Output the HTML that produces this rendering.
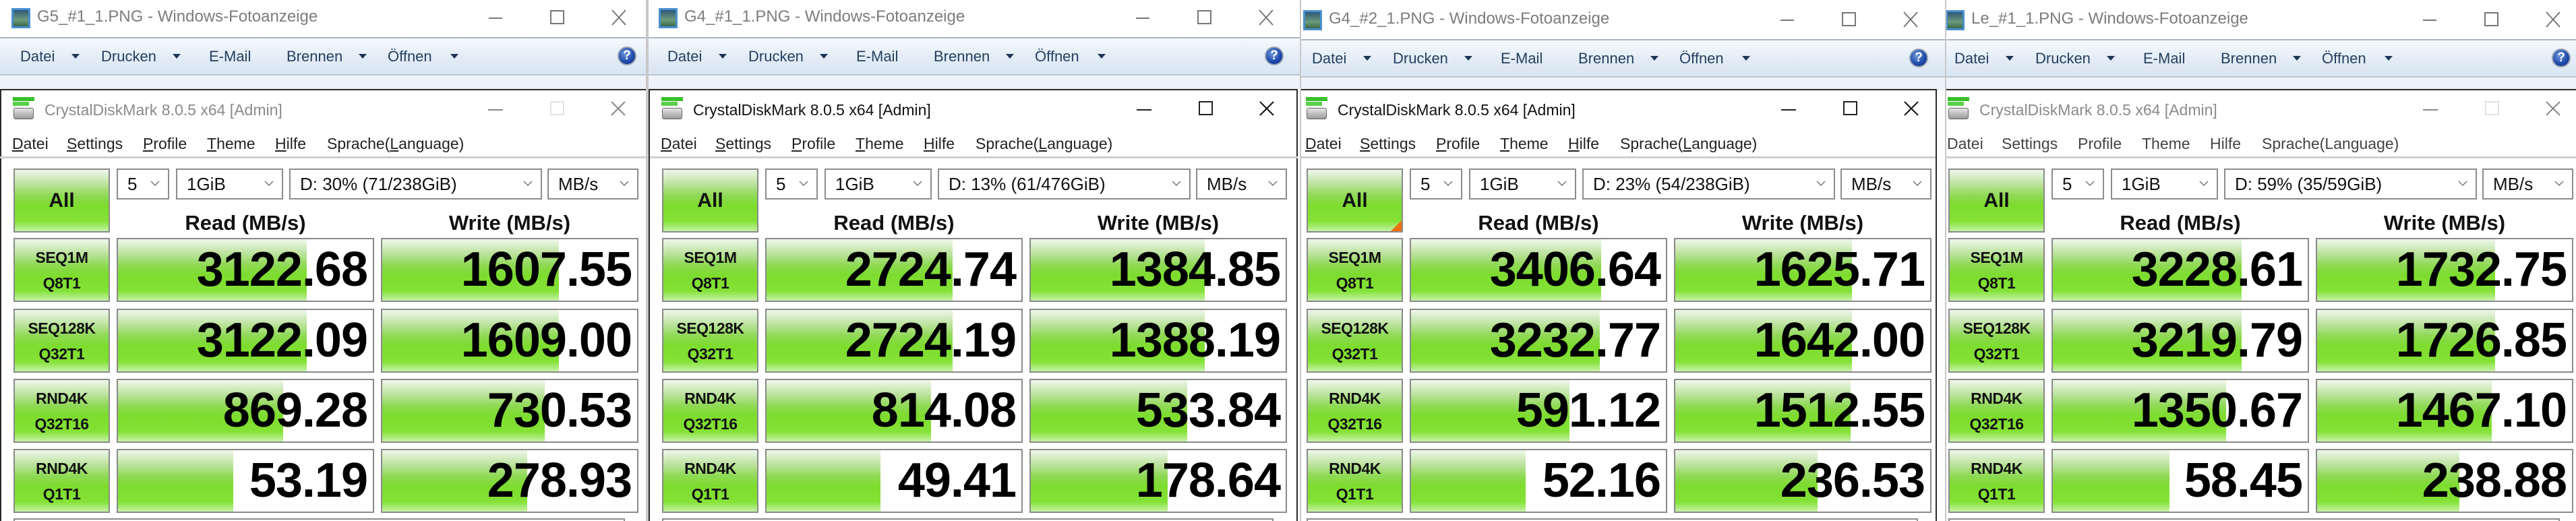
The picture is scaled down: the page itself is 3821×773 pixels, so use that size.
<!DOCTYPE html>
<html><head><meta charset="utf-8">
<style>
*{margin:0;padding:0;box-sizing:border-box}
body{width:3821px;height:773px;overflow:hidden;background:#fff;font-family:"Liberation Sans",Arial,sans-serif;position:relative}
.pn{position:absolute;top:0;height:773px;overflow:hidden;background:#fff}
.ly{position:absolute;top:0;left:0;width:980px;height:773px}
.a{position:absolute}
.ptitle{top:11px;left:55px;font-size:24px;color:#7c7c7c;white-space:nowrap}
.tb{left:0;top:55px;width:980px;height:57px;border-top:2px solid #aab7c5;border-bottom:2px solid #b8c4d2;background:linear-gradient(#f5f9fd,#e4edf7 50%,#d9e5f2)}
.strip{left:0;top:112px;width:980px;height:20px;background:#eef3f9}
.ti{top:71px;font-size:22px;color:#253e5e;white-space:nowrap}
.ar{top:80px;width:0;height:0;border-left:6px solid transparent;border-right:6px solid transparent;border-top:7px solid #1e3556}
.help{left:916px;top:69px;width:28px;height:28px;border-radius:50%;background:radial-gradient(circle at 40% 35%,#6f9be0,#1c46a8 60%,#123080);border:2px solid #9aa4b0;color:#fff;font-weight:bold;font-size:19px;text-align:center;line-height:24px}
.cdm{left:0;top:132px;width:980px;height:641px;background:#fff;border-top:2px solid #2a2a2a}
.ctitle{top:150px;left:66px;font-size:23px;white-space:nowrap}
.menu{top:200px;font-size:23px;color:#222;white-space:nowrap}
.menu u{text-decoration:underline}
.sep{left:0;top:232px;width:980px;height:3px;background:#cfcfcf}
.g{background:linear-gradient(#eef7ea 0%,#bfe4a3 22%,#8fd955 42%,#7ddc2e 58%,#84e236 84%,#c6f2a8 100%)}
.all{left:20px;top:250px;width:143px;height:95px;border:2px solid #8a8a8a;font-weight:bold;font-size:30px;text-align:center;line-height:91px;color:#111}
.cb{top:250px;height:46px;border:2px solid #8c8c8c;background:#fff;font-size:26px;line-height:42px;padding-left:14px;color:#111;white-space:nowrap}
.cb svg{position:absolute;right:12px;top:16px}
.hd{top:313px;width:382px;font-weight:bold;font-size:31px;text-align:center;color:#111}
.lb{left:20px;width:143px;height:95px;border:2px solid #8a8a8a;text-align:center;font-size:23px;color:#111;line-height:38px;padding-top:8px;font-weight:bold;letter-spacing:-0.5px}
.vb{width:382px;height:95px;border:2px solid #8a8a8a;background:#fff;overflow:hidden}
.vb .f{position:absolute;left:0;top:0;bottom:0}
.vb .t{position:absolute;right:8px;top:0;line-height:91px;font-size:72px;font-weight:bold;color:#000;letter-spacing:-1px}
.bot{left:20px;top:769px;width:907px;height:10px;border:2px solid #8a8a8a}
</style></head><body>

<!-- PANEL 1 -->
<div class="pn" style="left:0;width:960px">
 <div class="ly" style="left:0">
  <div class="a" style="left:17px;top:12px;width:28px;height:30px;border:3px solid #4a8fd0;background:linear-gradient(#2d5878,#6d9a7a 60%,#3a6a4a)"></div>
  <div class="a ptitle">G5_#1_1.PNG - Windows-Fotoanzeige</div>
  <div class="a" style="left:725px;top:26px;width:20px;height:2px;background:#777"></div>
  <div class="a" style="left:816px;top:15px;width:21px;height:21px;border:2px solid #777"></div>
  <svg class="a" style="left:907px;top:14px" width="22" height="24"><path d="M1 1L21 23M21 1L1 23" stroke="#777" stroke-width="2"/></svg>
  <div class="a tb"></div>
  <div class="a ti" style="left:30px">Datei</div><div class="a ar" style="left:106px"></div>
  <div class="a ti" style="left:150px">Drucken</div><div class="a ar" style="left:256px"></div>
  <div class="a ti" style="left:310px">E-Mail</div>
  <div class="a ti" style="left:425px">Brennen</div><div class="a ar" style="left:532px"></div>
  <div class="a ti" style="left:575px">Öffnen</div><div class="a ar" style="left:668px"></div>
  <div class="a help">?</div>
  <div class="a strip"></div>
 </div>
 <div class="ly" style="left:0">
  <div class="a cdm" style="border-left:2px solid #2a2a2a"></div>
  <div class="a" style="left:19px;top:144px;width:32px;height:6px;background:#39c02c"></div>
  <div class="a" style="left:19px;top:151px;width:24px;height:6px;background:#5bd04a"></div>
  <div class="a" style="left:20px;top:160px;width:30px;height:17px;border-radius:3px;background:linear-gradient(#e6e6e6,#9a9a9a);border:1px solid #666"></div>
  <div class="a ctitle" style="color:#8a8a8a">CrystalDiskMark 8.0.5 x64 [Admin]</div>
  <div class="a" style="left:724px;top:162px;width:22px;height:2px;background:#888"></div>
  <div class="a" style="left:816px;top:150px;width:21px;height:21px;border:2px solid #e2e2e2"></div>
  <svg class="a" style="left:906px;top:150px" width="22" height="22"><path d="M1 1L21 21M21 1L1 21" stroke="#888" stroke-width="2"/></svg>
  <div class="a menu" style="left:18px"><u>D</u>atei</div>
  <div class="a menu" style="left:99px"><u>S</u>ettings</div>
  <div class="a menu" style="left:212px"><u>P</u>rofile</div>
  <div class="a menu" style="left:307px"><u>T</u>heme</div>
  <div class="a menu" style="left:408px"><u>H</u>ilfe</div>
  <div class="a menu" style="left:485px">Sprache(<u>L</u>anguage)</div>
  <div class="a sep"></div>
  <div class="a all g">All</div>
  <div class="a cb" style="left:173px;width:78px">5<svg width="14" height="9"><path d="M1 1L7 7L13 1" stroke="#777" fill="none" stroke-width="1.5"/></svg></div>
  <div class="a cb" style="left:261px;width:159px">1GiB<svg width="14" height="9"><path d="M1 1L7 7L13 1" stroke="#777" fill="none" stroke-width="1.5"/></svg></div>
  <div class="a cb" style="left:429px;width:375px">D: 30% (71/238GiB)<svg width="14" height="9"><path d="M1 1L7 7L13 1" stroke="#777" fill="none" stroke-width="1.5"/></svg></div>
  <div class="a cb" style="left:812px;width:135px">MB/s<svg width="14" height="9"><path d="M1 1L7 7L13 1" stroke="#777" fill="none" stroke-width="1.5"/></svg></div>
  <div class="a hd" style="left:173px">Read (MB/s)</div>
  <div class="a hd" style="left:565px">Write (MB/s)</div>
  <div class="a lb g" style="top:353px">SEQ1M<br>Q8T1</div>
  <div class="a lb g" style="top:458px">SEQ128K<br>Q32T1</div>
  <div class="a lb g" style="top:562px">RND4K<br>Q32T16</div>
  <div class="a lb g" style="top:666px">RND4K<br>Q1T1</div>
  <div class="a vb" style="left:173px;top:353px"><div class="f g" style="width:280px"></div><div class="t">3122.68</div></div>
  <div class="a vb" style="left:173px;top:458px"><div class="f g" style="width:280px"></div><div class="t">3122.09</div></div>
  <div class="a vb" style="left:173px;top:562px"><div class="f g" style="width:245px"></div><div class="t">869.28</div></div>
  <div class="a vb" style="left:173px;top:666px"><div class="f g" style="width:171px"></div><div class="t">53.19</div></div>
  <div class="a vb" style="left:565px;top:353px"><div class="f g" style="width:262px"></div><div class="t">1607.55</div></div>
  <div class="a vb" style="left:565px;top:458px"><div class="f g" style="width:262px"></div><div class="t">1609.00</div></div>
  <div class="a vb" style="left:565px;top:562px"><div class="f g" style="width:241px"></div><div class="t">730.53</div></div>
  <div class="a vb" style="left:565px;top:666px"><div class="f g" style="width:215px"></div><div class="t">278.93</div></div>
  <div class="a bot"></div>
 </div>
 <div class="a" style="left:958px;top:0;width:2px;height:773px;background:#c8c8c8"></div>
</div>

<!-- PANEL 2 -->
<div class="pn" style="left:960px;width:968px">
 <div class="ly" style="left:0">
  <div class="a" style="left:17px;top:12px;width:28px;height:30px;border:3px solid #4a8fd0;background:linear-gradient(#2d5878,#6d9a7a 60%,#3a6a4a)"></div>
  <div class="a ptitle">G4_#1_1.PNG - Windows-Fotoanzeige</div>
  <div class="a" style="left:725px;top:26px;width:20px;height:2px;background:#777"></div>
  <div class="a" style="left:816px;top:15px;width:21px;height:21px;border:2px solid #777"></div>
  <svg class="a" style="left:907px;top:14px" width="22" height="24"><path d="M1 1L21 23M21 1L1 23" stroke="#777" stroke-width="2"/></svg>
  <div class="a tb"></div>
  <div class="a ti" style="left:30px">Datei</div><div class="a ar" style="left:106px"></div>
  <div class="a ti" style="left:150px">Drucken</div><div class="a ar" style="left:256px"></div>
  <div class="a ti" style="left:310px">E-Mail</div>
  <div class="a ti" style="left:425px">Brennen</div><div class="a ar" style="left:532px"></div>
  <div class="a ti" style="left:575px">Öffnen</div><div class="a ar" style="left:668px"></div>
  <div class="a help">?</div>
  <div class="a strip"></div>
  <div class="a" style="left:0;top:0;width:2px;height:773px;background:#c8c8c8"></div>
 </div>
 <div class="ly" style="left:2px">
  <div class="a cdm" style="border-left:2px solid #2a2a2a;width:963px;border-right:2px solid #2a2a2a"></div>
  <div class="a" style="left:19px;top:144px;width:32px;height:6px;background:#39c02c"></div>
  <div class="a" style="left:19px;top:151px;width:24px;height:6px;background:#5bd04a"></div>
  <div class="a" style="left:20px;top:160px;width:30px;height:17px;border-radius:3px;background:linear-gradient(#e6e6e6,#9a9a9a);border:1px solid #666"></div>
  <div class="a ctitle" style="color:#111">CrystalDiskMark 8.0.5 x64 [Admin]</div>
  <div class="a" style="left:724px;top:162px;width:22px;height:2px;background:#222"></div>
  <div class="a" style="left:816px;top:150px;width:21px;height:21px;border:2px solid #222"></div>
  <svg class="a" style="left:906px;top:150px" width="22" height="22"><path d="M1 1L21 21M21 1L1 21" stroke="#111" stroke-width="2"/></svg>
  <div class="a menu" style="left:18px"><u>D</u>atei</div>
  <div class="a menu" style="left:99px"><u>S</u>ettings</div>
  <div class="a menu" style="left:212px"><u>P</u>rofile</div>
  <div class="a menu" style="left:307px"><u>T</u>heme</div>
  <div class="a menu" style="left:408px"><u>H</u>ilfe</div>
  <div class="a menu" style="left:485px">Sprache(<u>L</u>anguage)</div>
  <div class="a sep" style="width:961px;left:2px"></div>
  <div class="a all g">All</div>
  <div class="a cb" style="left:173px;width:78px">5<svg width="14" height="9"><path d="M1 1L7 7L13 1" stroke="#777" fill="none" stroke-width="1.5"/></svg></div>
  <div class="a cb" style="left:261px;width:159px">1GiB<svg width="14" height="9"><path d="M1 1L7 7L13 1" stroke="#777" fill="none" stroke-width="1.5"/></svg></div>
  <div class="a cb" style="left:429px;width:375px">D: 13% (61/476GiB)<svg width="14" height="9"><path d="M1 1L7 7L13 1" stroke="#777" fill="none" stroke-width="1.5"/></svg></div>
  <div class="a cb" style="left:812px;width:135px">MB/s<svg width="14" height="9"><path d="M1 1L7 7L13 1" stroke="#777" fill="none" stroke-width="1.5"/></svg></div>
  <div class="a hd" style="left:173px">Read (MB/s)</div>
  <div class="a hd" style="left:565px">Write (MB/s)</div>
  <div class="a lb g" style="top:353px">SEQ1M<br>Q8T1</div>
  <div class="a lb g" style="top:458px">SEQ128K<br>Q32T1</div>
  <div class="a lb g" style="top:562px">RND4K<br>Q32T16</div>
  <div class="a lb g" style="top:666px">RND4K<br>Q1T1</div>
  <div class="a vb" style="left:173px;top:353px"><div class="f g" style="width:276px"></div><div class="t">2724.74</div></div>
  <div class="a vb" style="left:173px;top:458px"><div class="f g" style="width:276px"></div><div class="t">2724.19</div></div>
  <div class="a vb" style="left:173px;top:562px"><div class="f g" style="width:244px"></div><div class="t">814.08</div></div>
  <div class="a vb" style="left:173px;top:666px"><div class="f g" style="width:169px"></div><div class="t">49.41</div></div>
  <div class="a vb" style="left:565px;top:353px"><div class="f g" style="width:258px"></div><div class="t">1384.85</div></div>
  <div class="a vb" style="left:565px;top:458px"><div class="f g" style="width:258px"></div><div class="t">1388.19</div></div>
  <div class="a vb" style="left:565px;top:562px"><div class="f g" style="width:232px"></div><div class="t">533.84</div></div>
  <div class="a vb" style="left:565px;top:666px"><div class="f g" style="width:203px"></div><div class="t">178.64</div></div>
  <div class="a bot"></div>
 </div>
</div>

<!-- PANEL 3 -->
<div class="pn" style="left:1928px;width:957px">
 <div class="ly" style="left:-12px;top:3px">
  <div class="a" style="left:17px;top:12px;width:28px;height:30px;border:3px solid #4a8fd0;background:linear-gradient(#2d5878,#6d9a7a 60%,#3a6a4a)"></div>
  <div class="a ptitle">G4_#2_1.PNG - Windows-Fotoanzeige</div>
  <div class="a" style="left:725px;top:26px;width:20px;height:2px;background:#777"></div>
  <div class="a" style="left:816px;top:15px;width:21px;height:21px;border:2px solid #777"></div>
  <svg class="a" style="left:907px;top:14px" width="22" height="24"><path d="M1 1L21 23M21 1L1 23" stroke="#777" stroke-width="2"/></svg>
  <div class="a tb"></div>
  <div class="a ti" style="left:30px">Datei</div><div class="a ar" style="left:106px"></div>
  <div class="a ti" style="left:150px">Drucken</div><div class="a ar" style="left:256px"></div>
  <div class="a ti" style="left:310px">E-Mail</div>
  <div class="a ti" style="left:425px">Brennen</div><div class="a ar" style="left:532px"></div>
  <div class="a ti" style="left:575px">Öffnen</div><div class="a ar" style="left:668px"></div>
  <div class="a help">?</div>
  <div class="a strip"></div>
 </div>
 <div class="a" style="left:0;top:0;width:2px;height:773px;background:#c8c8c8"></div>
 <div class="ly" style="left:-10px">
  <div class="a cdm" style="left:12px;width:943px;border-right:2px solid #2a2a2a"></div>
  <div class="a" style="left:19px;top:144px;width:32px;height:6px;background:#39c02c"></div>
  <div class="a" style="left:19px;top:151px;width:24px;height:6px;background:#5bd04a"></div>
  <div class="a" style="left:20px;top:160px;width:30px;height:17px;border-radius:3px;background:linear-gradient(#e6e6e6,#9a9a9a);border:1px solid #666"></div>
  <div class="a ctitle" style="color:#111">CrystalDiskMark 8.0.5 x64 [Admin]</div>
  <div class="a" style="left:724px;top:162px;width:22px;height:2px;background:#222"></div>
  <div class="a" style="left:816px;top:150px;width:21px;height:21px;border:2px solid #222"></div>
  <svg class="a" style="left:906px;top:150px" width="22" height="22"><path d="M1 1L21 21M21 1L1 21" stroke="#111" stroke-width="2"/></svg>
  <div class="a menu" style="left:18px"><u>D</u>atei</div>
  <div class="a menu" style="left:99px"><u>S</u>ettings</div>
  <div class="a menu" style="left:212px"><u>P</u>rofile</div>
  <div class="a menu" style="left:307px"><u>T</u>heme</div>
  <div class="a menu" style="left:408px"><u>H</u>ilfe</div>
  <div class="a menu" style="left:485px">Sprache(<u>L</u>anguage)</div>
  <div class="a sep" style="left:12px;width:941px"></div>
  <div class="a all g">All<div class="a" style="right:0;bottom:0;width:0;height:0;border-left:16px solid transparent;border-bottom:16px solid #f07010"></div></div>
  <div class="a cb" style="left:173px;width:78px">5<svg width="14" height="9"><path d="M1 1L7 7L13 1" stroke="#777" fill="none" stroke-width="1.5"/></svg></div>
  <div class="a cb" style="left:261px;width:159px">1GiB<svg width="14" height="9"><path d="M1 1L7 7L13 1" stroke="#777" fill="none" stroke-width="1.5"/></svg></div>
  <div class="a cb" style="left:429px;width:375px">D: 23% (54/238GiB)<svg width="14" height="9"><path d="M1 1L7 7L13 1" stroke="#777" fill="none" stroke-width="1.5"/></svg></div>
  <div class="a cb" style="left:812px;width:135px">MB/s<svg width="14" height="9"><path d="M1 1L7 7L13 1" stroke="#777" fill="none" stroke-width="1.5"/></svg></div>
  <div class="a hd" style="left:173px">Read (MB/s)</div>
  <div class="a hd" style="left:565px">Write (MB/s)</div>
  <div class="a lb g" style="top:353px">SEQ1M<br>Q8T1</div>
  <div class="a lb g" style="top:458px">SEQ128K<br>Q32T1</div>
  <div class="a lb g" style="top:562px">RND4K<br>Q32T16</div>
  <div class="a lb g" style="top:666px">RND4K<br>Q1T1</div>
  <div class="a vb" style="left:173px;top:353px"><div class="f g" style="width:282px"></div><div class="t">3406.64</div></div>
  <div class="a vb" style="left:173px;top:458px"><div class="f g" style="width:280px"></div><div class="t">3232.77</div></div>
  <div class="a vb" style="left:173px;top:562px"><div class="f g" style="width:235px"></div><div class="t">591.12</div></div>
  <div class="a vb" style="left:173px;top:666px"><div class="f g" style="width:170px"></div><div class="t">52.16</div></div>
  <div class="a vb" style="left:565px;top:353px"><div class="f g" style="width:262px"></div><div class="t">1625.71</div></div>
  <div class="a vb" style="left:565px;top:458px"><div class="f g" style="width:262px"></div><div class="t">1642.00</div></div>
  <div class="a vb" style="left:565px;top:562px"><div class="f g" style="width:260px"></div><div class="t">1512.55</div></div>
  <div class="a vb" style="left:565px;top:666px"><div class="f g" style="width:211px"></div><div class="t">236.53</div></div>
  <div class="a bot"></div>
 </div>
</div>

<!-- PANEL 4 -->
<div class="pn" style="left:2885px;width:936px">
 <div class="ly" style="left:-16px;top:3px">
  <div class="a" style="left:17px;top:12px;width:28px;height:30px;border:3px solid #4a8fd0;background:linear-gradient(#2d5878,#6d9a7a 60%,#3a6a4a)"></div>
  <div class="a ptitle">Le_#1_1.PNG - Windows-Fotoanzeige</div>
  <div class="a" style="left:725px;top:26px;width:20px;height:2px;background:#777"></div>
  <div class="a" style="left:816px;top:15px;width:21px;height:21px;border:2px solid #777"></div>
  <svg class="a" style="left:907px;top:14px" width="22" height="24"><path d="M1 1L21 23M21 1L1 23" stroke="#777" stroke-width="2"/></svg>
  <div class="a tb"></div>
  <div class="a ti" style="left:30px">Datei</div><div class="a ar" style="left:106px"></div>
  <div class="a ti" style="left:150px">Drucken</div><div class="a ar" style="left:256px"></div>
  <div class="a ti" style="left:310px">E-Mail</div>
  <div class="a ti" style="left:425px">Brennen</div><div class="a ar" style="left:532px"></div>
  <div class="a ti" style="left:575px">Öffnen</div><div class="a ar" style="left:668px"></div>
  <div class="a help">?</div>
  <div class="a strip"></div>
 </div>
 <div class="a" style="left:0;top:0;width:2px;height:773px;background:#c8c8c8"></div>
 <div class="ly" style="left:-15px">
  <div class="a cdm" style="left:17px"></div>
  <div class="a" style="left:19px;top:144px;width:32px;height:6px;background:#39c02c"></div>
  <div class="a" style="left:19px;top:151px;width:24px;height:6px;background:#5bd04a"></div>
  <div class="a" style="left:20px;top:160px;width:30px;height:17px;border-radius:3px;background:linear-gradient(#e6e6e6,#9a9a9a);border:1px solid #666"></div>
  <div class="a ctitle" style="color:#8a8a8a">CrystalDiskMark 8.0.5 x64 [Admin]</div>
  <div class="a" style="left:724px;top:162px;width:22px;height:2px;background:#888"></div>
  <div class="a" style="left:816px;top:150px;width:21px;height:21px;border:2px solid #e2e2e2"></div>
  <svg class="a" style="left:906px;top:150px" width="22" height="22"><path d="M1 1L21 21M21 1L1 21" stroke="#888" stroke-width="2"/></svg>
  <div class="a menu" style="left:18px;color:#444">Datei</div>
  <div class="a menu" style="left:99px;color:#444">Settings</div>
  <div class="a menu" style="left:212px;color:#444">Profile</div>
  <div class="a menu" style="left:307px;color:#444">Theme</div>
  <div class="a menu" style="left:408px;color:#444">Hilfe</div>
  <div class="a menu" style="left:485px;color:#444">Sprache(Language)</div>
  <div class="a sep" style="left:17px"></div>
  <div class="a all g">All</div>
  <div class="a cb" style="left:173px;width:78px">5<svg width="14" height="9"><path d="M1 1L7 7L13 1" stroke="#777" fill="none" stroke-width="1.5"/></svg></div>
  <div class="a cb" style="left:261px;width:159px">1GiB<svg width="14" height="9"><path d="M1 1L7 7L13 1" stroke="#777" fill="none" stroke-width="1.5"/></svg></div>
  <div class="a cb" style="left:429px;width:375px">D: 59% (35/59GiB)<svg width="14" height="9"><path d="M1 1L7 7L13 1" stroke="#777" fill="none" stroke-width="1.5"/></svg></div>
  <div class="a cb" style="left:812px;width:135px">MB/s<svg width="14" height="9"><path d="M1 1L7 7L13 1" stroke="#777" fill="none" stroke-width="1.5"/></svg></div>
  <div class="a hd" style="left:173px">Read (MB/s)</div>
  <div class="a hd" style="left:565px">Write (MB/s)</div>
  <div class="a lb g" style="top:353px">SEQ1M<br>Q8T1</div>
  <div class="a lb g" style="top:458px">SEQ128K<br>Q32T1</div>
  <div class="a lb g" style="top:562px">RND4K<br>Q32T16</div>
  <div class="a lb g" style="top:666px">RND4K<br>Q1T1</div>
  <div class="a vb" style="left:173px;top:353px"><div class="f g" style="width:280px"></div><div class="t">3228.61</div></div>
  <div class="a vb" style="left:173px;top:458px"><div class="f g" style="width:280px"></div><div class="t">3219.79</div></div>
  <div class="a vb" style="left:173px;top:562px"><div class="f g" style="width:257px"></div><div class="t">1350.67</div></div>
  <div class="a vb" style="left:173px;top:666px"><div class="f g" style="width:173px"></div><div class="t">58.45</div></div>
  <div class="a vb" style="left:565px;top:353px"><div class="f g" style="width:264px"></div><div class="t">1732.75</div></div>
  <div class="a vb" style="left:565px;top:458px"><div class="f g" style="width:264px"></div><div class="t">1726.85</div></div>
  <div class="a vb" style="left:565px;top:562px"><div class="f g" style="width:259px"></div><div class="t">1467.10</div></div>
  <div class="a vb" style="left:565px;top:666px"><div class="f g" style="width:211px"></div><div class="t">238.88</div></div>
  <div class="a bot"></div>
 </div>
</div>

</body></html>
